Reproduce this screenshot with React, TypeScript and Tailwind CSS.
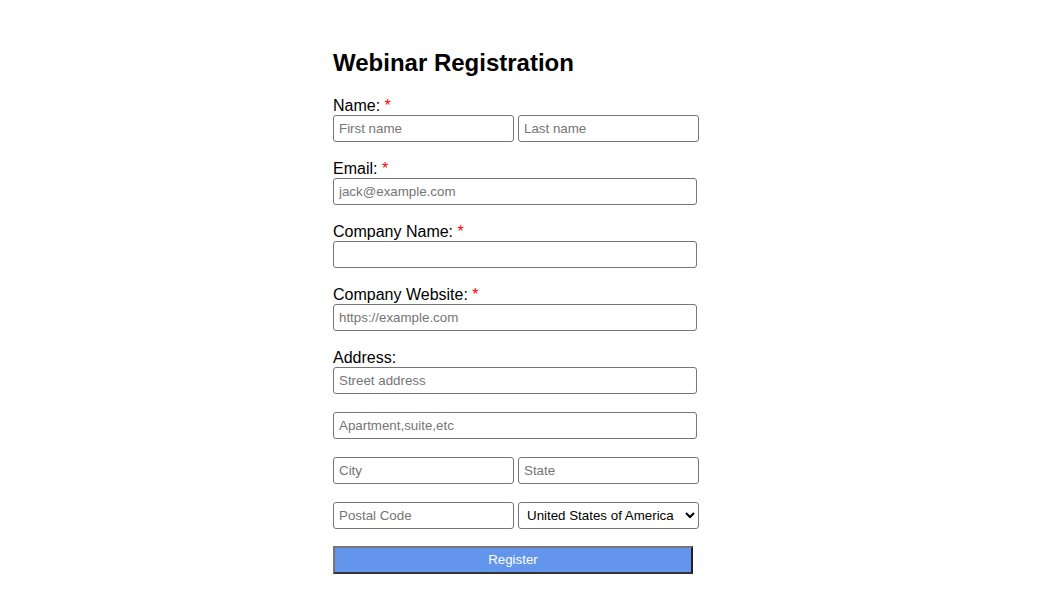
import React from 'react'

const inputCls =
  'block h-[27px] rounded-[3px] border border-[#767676] bg-white px-[5px] text-[13.333px] text-black placeholder:text-[#757575] outline-none'

function Label({ text, required }: { text: string; required?: boolean }) {
  return (
    <label className="block text-[16px] leading-[18px] text-black">
      {text}
      {required && <span className="text-[#ff0000]"> *</span>}
    </label>
  )
}

export default function App() {
  return (
    <div className="min-h-screen bg-white font-['Liberation_Sans',Arial,sans-serif]">
      <div className="mx-auto w-[393px] pt-[49px]">
        <h2 className="mb-[20px] text-[24px] font-bold leading-[28px] text-black">Webinar Registration</h2>
        <form onSubmit={(e) => e.preventDefault()}>
          <div className="mb-[18px]">
            <Label text="Name:" required />
            <div className="flex gap-[4px]">
              <input className={`${inputCls} w-[181px]`} placeholder="First name" />
              <input className={`${inputCls} w-[181px]`} placeholder="Last name" />
            </div>
          </div>

          <div className="mb-[18px]">
            <Label text="Email:" required />
            <input className={`${inputCls} w-[364px]`} placeholder="jack@example.com" />
          </div>

          <div className="mb-[18px]">
            <Label text="Company Name:" required />
            <input className={`${inputCls} w-[364px]`} />
          </div>

          <div className="mb-[18px]">
            <Label text="Company Website:" required />
            <input className={`${inputCls} w-[364px]`} placeholder="https://example.com" />
          </div>

          <div className="mb-[18px]">
            <Label text="Address:" />
            <input className={`${inputCls} w-[364px]`} placeholder="Street address" />
          </div>
          <input className={`${inputCls} mb-[18px] w-[364px]`} placeholder="Apartment,suite,etc" />
          <div className="mb-[18px] flex gap-[4px]">
            <input className={`${inputCls} w-[181px]`} placeholder="City" />
            <input className={`${inputCls} w-[181px]`} placeholder="State" />
          </div>
          <div className="mb-[17px] flex gap-[4px]">
            <input className={`${inputCls} w-[181px]`} placeholder="Postal Code" />
            <select
              className="block h-[27px] w-[181px] rounded-[3px] border border-[#767676] bg-white pl-[4px] text-[13.333px] text-black"
              defaultValue="US"
            >
              <option value="US">United States of America</option>
              <option value="CA">Canada</option>
              <option value="UK">United Kingdom</option>
            </select>
          </div>

          <button
            type="submit"
            className="block h-[28px] w-[360px] border-2 border-t-[#767676] border-l-[#767676] border-r-[#222222] border-b-[#333333] bg-[#6495ed] text-[13.333px] text-white"
          >
            Register
          </button>
        </form>
      </div>
    </div>
  )
}
